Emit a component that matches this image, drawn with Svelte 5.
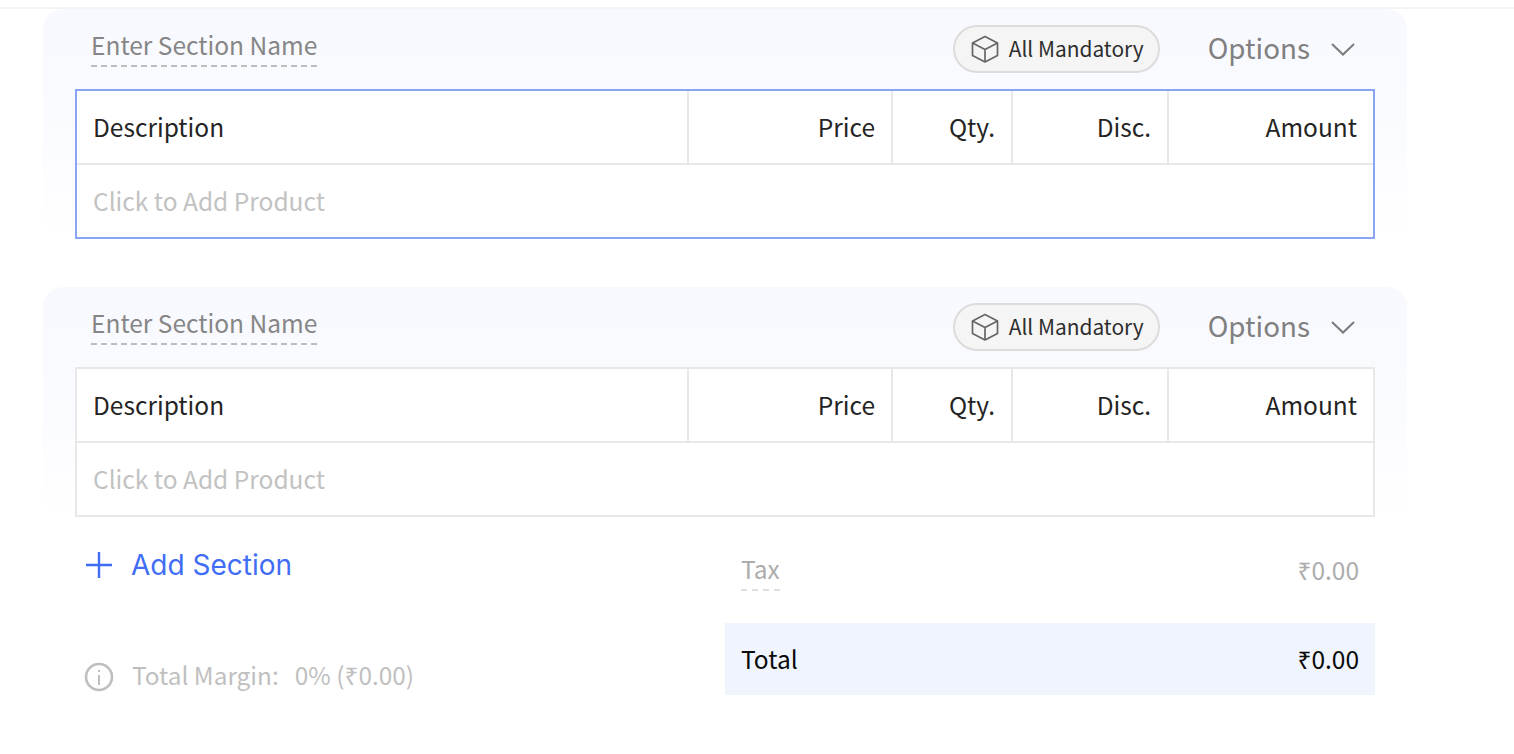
<script>
  const columns = [
    { label: 'Description', cls: 'desc' },
    { label: 'Price', cls: 'price' },
    { label: 'Qty.', cls: 'qty' },
    { label: 'Disc.', cls: 'disc' },
    { label: 'Amount', cls: 'amount' }
  ];
  const sections = [{ active: true }, { active: false }];
</script>

<div class="page">
  <div class="topline"></div>
  <div class="sections">
    {#each sections as section}
      <section class="section">
        <div class="section-head">
          <span class="name">Enter Section Name</span>
          <div class="controls">
            <span class="pill">
              <svg width="28" height="28" viewBox="0 0 28 28" fill="none" stroke="#666" stroke-width="1.7" stroke-linejoin="round">
                <path d="M14 1.5 26.5 8V20.5L14 27 1.5 20.5V8Z" />
                <path d="M1.5 8 14 14.5 26.5 8M14 14.5V27" />
              </svg>
              <span class="pill-text">All Mandatory</span>
            </span>
            <span class="options">Options</span>
            <svg class="chev" width="26" height="14" viewBox="0 0 26 14" fill="none" stroke="#7c7c7c" stroke-width="2">
              <path d="M2 2 13 12.5 24 2" />
            </svg>
          </div>
        </div>
        <div class="table" class:active={section.active}>
          <div class="row head">
            {#each columns as col}
              <div class="cell {col.cls}">{col.label}</div>
            {/each}
          </div>
          <div class="row body">Click to Add Product</div>
        </div>
      </section>
    {/each}
  </div>

  <div class="footer">
    <div class="left">
      <div class="add">
        <svg width="28" height="28" viewBox="0 0 28 28" fill="none" stroke="#3f6df5" stroke-width="2.4">
          <path d="M14 1V27M1 14H27" />
        </svg>
        <span>Add Section</span>
      </div>
      <div class="margin">
        <svg width="30" height="30" viewBox="0 0 30 30" fill="none" stroke="#bfbfbf">
          <circle cx="15" cy="15" r="13" stroke-width="2.6" />
          <path d="M15 13V23" stroke-width="2" />
          <path d="M15 8V10" stroke-width="2" />
        </svg>
        <span class="margin-label">Total Margin:</span>
        <span class="margin-value">0% (₹0.00)</span>
      </div>
    </div>
    <div class="totals">
      <div class="tax-row">
        <span class="tax">Tax</span>
        <span>₹0.00</span>
      </div>
      <div class="total-row">
        <span>Total</span>
        <span>₹0.00</span>
      </div>
    </div>
  </div>
</div>

<style>
  :global(body) {
    margin: 0;
    background: #fff;
  }
  .page {
    font-family: "Noto Sans CJK JP", "Noto Sans", sans-serif;
    height: 754px;
    overflow: hidden;
    padding-top: 7px;
    box-sizing: border-box;
  }
  .topline {
    height: 2px;
    background: #f4f4f4;
  }
  .sections {
    display: flex;
    flex-direction: column;
    gap: 48px;
    width: 1364px;
    margin-left: 43px;
  }
  .section {
    padding: 0 32px;
    border-radius: 20px 20px 0 0;
    background: linear-gradient(180deg, #f8f9fe 0%, #fafbff 50%, #ffffff 100%);
    height: 230px;
    box-sizing: border-box;
  }
  .section-head {
    height: 80px;
    display: flex;
    justify-content: space-between;
    box-sizing: border-box;
  }
  .name {
    margin: 19px 0 0 16px;
    height: 39px;
    line-height: 34px;
    font-size: 24.5px;
    color: #868686;
    border-bottom: 2px dashed #bdbdbd;
    box-sizing: border-box;
  }
  .controls {
    display: flex;
    align-items: center;
    height: 80px;
  }
  .pill {
    display: flex;
    align-items: center;
    gap: 10px;
    box-sizing: border-box;
    width: 207px;
    height: 48px;
    padding-left: 16px;
    border: 2px solid #dcdcdc;
    border-radius: 24px;
    background: #f5f5f5;
    font-size: 20.9px;
    color: #2e2e2e;
  }
  .pill-text {
    line-height: 30px;
    margin-top: -2px;
  }
  .options {
    margin-left: 48px;
    font-size: 27.8px;
    line-height: 36px;
    margin-top: -4px;
    color: #808080;
  }
  .chev {
    margin-left: 20px;
    margin-right: 19px;
    margin-top: -1px;
  }
  .table {
    box-sizing: border-box;
    height: 150px;
    border: 2px solid #e8e8e8;
    background: #fff;
  }
  .table.active {
    border-color: #8aa4f5;
  }
  .row {
    box-sizing: border-box;
    height: 74px;
    display: flex;
    font-size: 24.5px;
    line-height: 34px;
  }
  .head {
    border-bottom: 2px solid #e8e8e8;
    color: #242424;
  }
  .body {
    align-items: center;
    padding: 0 0 2px 16px;
    color: #c2c2c2;
  }
  .cell {
    box-sizing: border-box;
    display: flex;
    align-items: center;
    justify-content: flex-end;
    padding: 0 16px 1px;
    border-right: 2px solid #e8e8e8;
  }
  .cell.desc { width: 612px; justify-content: flex-start; }
  .cell.price { width: 204px; }
  .cell.qty { width: 120px; }
  .cell.disc { width: 156px; }
  .cell.amount { flex: 1; border-right: 0; }
  .footer {
    display: flex;
    justify-content: space-between;
    width: 1300px;
    margin-left: 75px;
  }
  .left {
    display: flex;
    flex-direction: column;
    padding-left: 10px;
  }
  .add {
    display: flex;
    align-items: center;
    gap: 18px;
    height: 28px;
    margin-top: 34px;
    font-family: Inter, sans-serif;
    font-size: 28px;
    color: #3f6df5;
  }
  .margin {
    display: flex;
    align-items: flex-start;
    height: 30px;
    margin-top: 83px;
    margin-left: -1px;
    font-size: 24.4px;
    line-height: 30px;
    color: #bfbfbf;
  }
  .margin svg {
    margin-right: 18px;
  }
  .margin-label {
    margin-right: 16px;
    margin-top: -2px;
  }
  .margin-value {
    margin-top: -2px;
  }
  .totals {
    width: 650px;
  }
  .tax-row, .total-row {
    display: flex;
    justify-content: space-between;
    padding: 0 16px;
    box-sizing: border-box;
    font-size: 24.5px;
  }
  .tax-row {
    height: 106px;
    padding-top: 35px;
    color: #adadad;
  }
  .tax {
    height: 39px;
    border-bottom: 2px dashed #dfdfdf;
    line-height: 34px;
    box-sizing: border-box;
  }
  .total-row {
    height: 72px;
    align-items: center;
    background: #f0f4fd;
    color: #0a0a0a;
    padding-bottom: 1px;
  }
</style>
